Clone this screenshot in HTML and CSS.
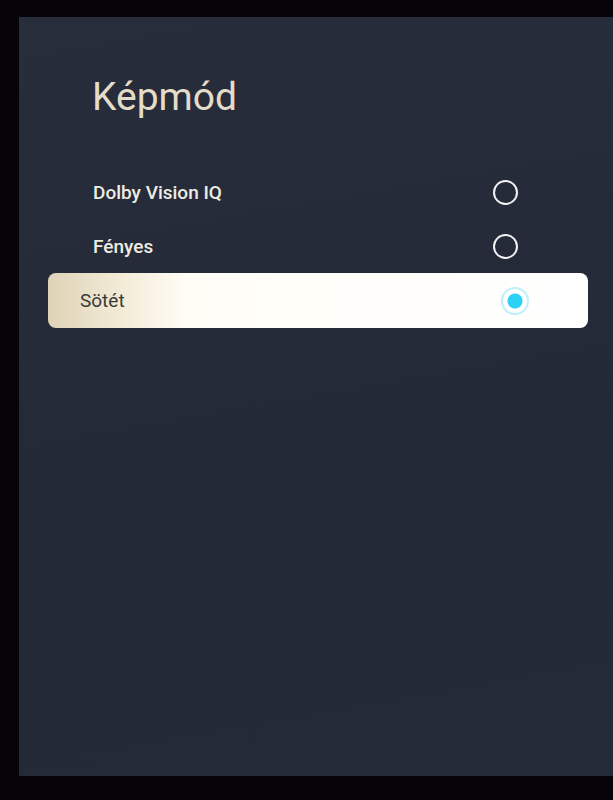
FILE: index.html
```html
<!DOCTYPE html>
<html>
<head>
    <meta charset="utf-8">
    <title>Képmód</title>
    <link rel="stylesheet" href="styles.css">
</head>
<body>

<div class="screen">
    <div class="panel">
        <h1 class="title">Képmód</h1>
        <ul class="options">
            <li class="option">
                <span class="label">Dolby Vision IQ</span>
                <span class="radio"></span>
            </li>
            <li class="option">
                <span class="label">Fényes</span>
                <span class="radio"></span>
            </li>
            <li class="option selected">
                <span class="label">Sötét</span>
                <span class="radio"></span>
            </li>
        </ul>
    </div>
</div>

</body>
</html>
```

FILE: styles.css
```css
html, body {
    margin: 0;
    height: 100%;
    background: #060409;
}
body {
    font-family: Roboto, "Noto Sans", sans-serif;
}
.screen {
    height: 800px;
    padding: 17px 0 24px 19px;
    box-sizing: border-box;
}
.panel {
    height: 100%;
    background: linear-gradient(170deg, #282d3b 0%, #242938 60%, #252a39 100%);
    padding: 60px 25px 0 29px;
    box-sizing: border-box;
}
.title {
    margin: 0 0 48px 44px;
    font-size: 39px;
    font-weight: 400;
    line-height: 40px;
    color: #e4dcc8;
}
.options {
    list-style: none;
    margin: 0;
    padding: 0;
}
.option {
    display: flex;
    align-items: center;
    justify-content: space-between;
    height: 54px;
    padding: 0 70px 0 45px;
    border-radius: 8px;
}
.option .label {
    font-size: 19px;
    font-weight: 500;
    color: #eeebe4;
}
.radio {
    width: 25px;
    height: 25px;
    border: 2px solid #f2f2f2;
    border-radius: 50%;
    box-sizing: border-box;
}
.option.selected {
    height: 55px;
    padding: 0 59px 0 32px;
    background: linear-gradient(90deg, #ded3b6 0%, #f3ecd8 14%, #fffdf6 26%, #ffffff 100%);
}
.option.selected .label {
    font-weight: 400;
    color: #3a3a3a;
}
.option.selected .radio {
    width: 28px;
    height: 28px;
    border: 2px solid #bfeff8;
    background: radial-gradient(circle, #2ad3f4 0, #2ad3f4 7px, #ffffff 8px);
}
```
